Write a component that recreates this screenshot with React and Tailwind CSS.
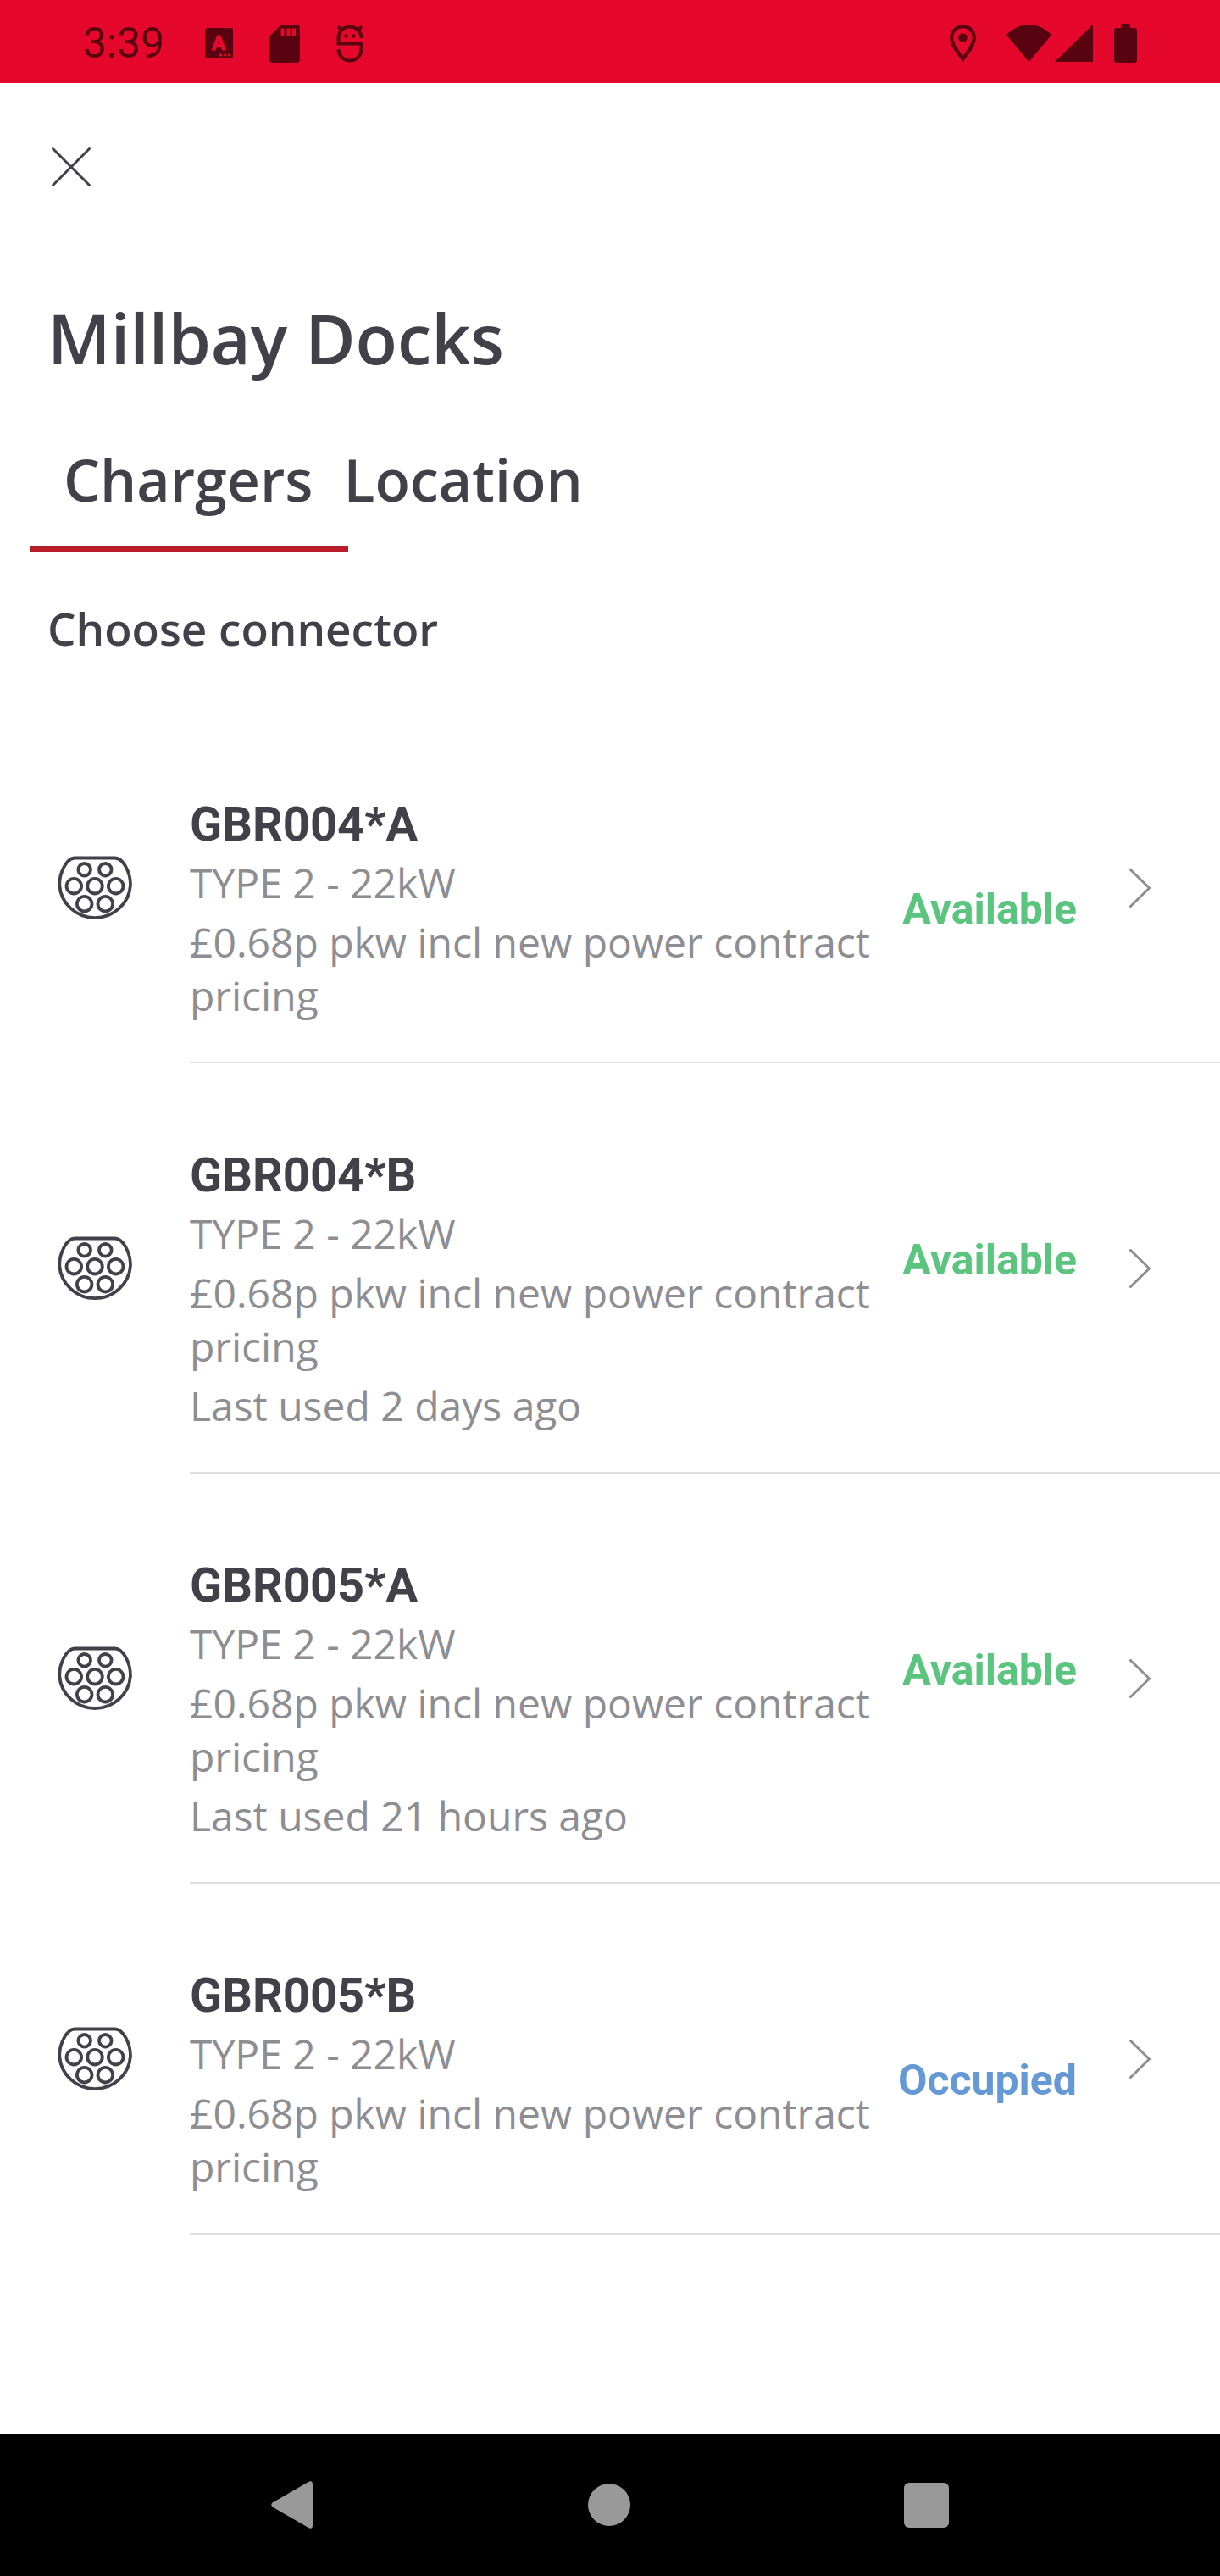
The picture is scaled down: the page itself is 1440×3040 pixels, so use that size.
import React, { useState } from 'react';

const chargers = [
  {
    id: 'GBR004*A',
    type: 'TYPE 2 - 22kW',
    price: '£0.68p pkw incl new power contract pricing',
    status: 'Available',
  },
  {
    id: 'GBR004*B',
    type: 'TYPE 2 - 22kW',
    price: '£0.68p pkw incl new power contract pricing',
    lastUsed: 'Last used 2 days ago',
    status: 'Available',
  },
  {
    id: 'GBR005*A',
    type: 'TYPE 2 - 22kW',
    price: '£0.68p pkw incl new power contract pricing',
    lastUsed: 'Last used 21 hours ago',
    status: 'Available',
  },
  {
    id: 'GBR005*B',
    type: 'TYPE 2 - 22kW',
    price: '£0.68p pkw incl new power contract pricing',
    status: 'Occupied',
  },
];

const StatusBar = () => {
  return (
    <div className="w-full h-[98px] bg-[#e6082c] text-[#5a0310] flex items-center justify-between px-[98px] pt-1">
      <div className="flex items-center">
        <span className="font-['Roboto',sans-serif] text-[50px] leading-[64px] mr-[48px]">
          3:39
        </span>
        <svg width="33" height="36" viewBox="0 0 33 36" className="mr-[43px]">
          <rect width="33" height="36" rx="3" fill="currentColor" />
          <text
            x="16"
            y="26"
            textAnchor="middle"
            fontFamily="Roboto, sans-serif"
            fontWeight="700"
            fontSize="24"
            fill="#e6082c"
            stroke="#e6082c"
            strokeWidth="1"
            strokeLinejoin="round"
          >
            A
          </text>
          <g fill="#e6082c">
            <circle cx="18.7" cy="32" r="1.7" />
            <circle cx="23.7" cy="32" r="1.7" />
            <circle cx="28.7" cy="32" r="1.7" />
          </g>
        </svg>
        <svg width="36" height="45" viewBox="0 0 36 45" className="mr-[43px]">
          <path
            d="M14 0H32a4 4 0 0 1 4 4V41a4 4 0 0 1-4 4H4a4 4 0 0 1-4-4V14Z"
            fill="currentColor"
          />
          <path
            d="M13.5 4.500h4v9h-4zM20.500 4.500h4v9h-4zM27 4.500h4v9h-4z"
            fill="#e6082c"
          />
        </svg>
        <svg
          width="32"
          height="45"
          viewBox="0 0 32 45"
          fill="none"
          stroke="currentColor"
          strokeWidth="4"
        >
          <path d="M29.500 16A13.500 13.500 0 0 0 2.500 16V22.500H29.500V29A13.500 13.500 0 0 1 2.500 29" />
          <path d="M2 2.500 6 6M30 2.500 26 6" />
          <circle cx="11.500" cy="13.500" r="2.200" fill="currentColor" stroke="none" />
          <circle cx="20.500" cy="13.500" r="2.200" fill="currentColor" stroke="none" />
        </svg>
      </div>

      <div className="flex items-center">
        <svg width="31" height="44" viewBox="0 0 31 44" className="mr-[36px]">
          <path
            d="M15.500 2.200C8 2.200 2.200 8 2.200 15.500 2.200 24 10 33 15.500 40.500 21 33 28.800 24 28.800 15.500 28.800 8 23 2.200 15.500 2.200Z"
            fill="none"
            stroke="currentColor"
            strokeWidth="4.200"
          />
          <circle cx="15.500" cy="15.500" r="5.300" fill="currentColor" />
        </svg>
        <svg width="53" height="44" viewBox="0 0 53 44" className="mr-1">
          <path d="M0 12.300C15-4 38-4 53 12.300L26.500 44Z" fill="currentColor" />
        </svg>
        <svg width="45" height="44" viewBox="0 0 45 44" className="mr-[25px]">
          <path d="M0 44 45 0V44Z" fill="currentColor" />
        </svg>
        <svg width="27" height="46" viewBox="0 0 27 46">
          <path
            d="M8 0H19V5H24a3 3 0 0 1 3 3V43a3 3 0 0 1-3 3H3a3 3 0 0 1-3-3V8a3 3 0 0 1 3-3H8Z"
            fill="currentColor"
          />
        </svg>
      </div>
    </div>
  );
};

const ConnectorIcon = () => {
  return (
    <svg
      width="88"
      height="78"
      viewBox="0 0 88 78"
      fill="none"
      stroke="#424149"
      strokeWidth="3.800"
      className="shrink-0"
    >
      <path d="M20.300 2.500H67.700C77 2.500 86 19 86 34.500A42 41.500 0 0 1 2.200 34.500C2.200 19 11 2.500 20.300 2.500Z" />
      <circle cx="31.700" cy="16.300" r="7.300" />
      <circle cx="56.300" cy="16.300" r="7.300" />
      <circle cx="19.300" cy="35.700" r="8.800" />
      <circle cx="44" cy="35.700" r="8.800" />
      <circle cx="68.700" cy="35.700" r="8.800" />
      <circle cx="31.700" cy="56.700" r="8.800" />
      <circle cx="56.300" cy="56.700" r="8.800" />
    </svg>
  );
};

const ChargerRow = ({ data }) => {
  return (
    <li className="w-full">
      <button
        type="button"
        className="w-full flex items-stretch text-left pl-[68px] cursor-pointer"
      >
        <span className="flex items-center pt-0.5 mr-[68px]">
          <ConnectorIcon />
        </span>
        <span className="flex-1 min-w-0 flex items-start pt-[99px] pb-[47px] pr-[62px] border-b-2 border-[#dedede]">
          <span className="flex-1 min-w-0 pr-3 text-[48px] leading-[63px] text-[#8e8d92]">
            <span className="block font-['Roboto',sans-serif] font-bold text-[56px] leading-[66px] text-[#424149]">
              {data.id}
            </span>
            <span className="block mt-1">{data.type}</span>
            <span className="block mt-[7px]">{data.price}</span>
            {data.lastUsed && (
              <span className="block mt-[7px]">{data.lastUsed}</span>
            )}
          </span>
          <span
            className={`mt-[102px] font-['Roboto',sans-serif] font-bold text-[50px] leading-[63px] ${
              data.status === 'Available' ? 'text-[#5bc47e]' : 'text-[#6499d6]'
            }`}
          >
            {data.status}
          </span>
        </span>
        <span className="flex items-center pt-0.5 pr-[82px] border-b-2 border-[#dedede]">
          <svg
            width="25"
            height="46"
            viewBox="0 0 25 46"
            fill="none"
            stroke="#8e8d92"
            strokeWidth="3"
            strokeLinecap="round"
            strokeLinejoin="round"
          >
            <path d="M1.500 1.500 23.500 23 1.500 44.500" />
          </svg>
        </span>
      </button>
    </li>
  );
};

const NavigationBar = () => {
  return (
    <nav className="w-full h-[168px] bg-black text-[#999999] flex items-center justify-between px-[320px] mt-auto">
      <button type="button" aria-label="Back" className="cursor-pointer">
        <svg width="50" height="56" viewBox="0 0 50 56" fill="currentColor">
          <path d="M1.500 25.500 44.500 0.700Q49 -1 49 4V52Q49 57 44.500 55.300L1.500 30.500Q-1 28 1.500 25.500Z" />
        </svg>
      </button>
      <button
        type="button"
        aria-label="Home"
        className="w-[50px] h-[50px] rounded-full bg-[#999999] cursor-pointer"
      />
      <button
        type="button"
        aria-label="Recent apps"
        className="w-[53px] h-[53px] rounded-md bg-[#999999] cursor-pointer"
      />
    </nav>
  );
};

const App = () => {
  const [active, setActive] = useState(1);

  return (
    <div className="w-full min-h-screen bg-white text-[#424149] font-['Open_Sans',sans-serif] flex flex-col">
      <StatusBar />
      <main className="w-full pt-[71px] pb-16">
        <div className="px-14">
          <button type="button" aria-label="Close" className="block cursor-pointer">
            <svg
              width="56"
              height="56"
              viewBox="0 0 56 56"
              stroke="currentColor"
              strokeWidth="3"
              strokeLinecap="round"
            >
              <path d="M6.500 6.500 49.500 49.500M49.500 6.500 6.500 49.500" />
            </svg>
          </button>
          <h1 className="mt-[124px] text-[81px] leading-[100px] font-semibold">
            Millbay Docks
          </h1>
        </div>

        {/* tabs */}
        <div className="mt-[73px] pl-[75px] flex gap-9 text-[68px] leading-[88px] font-semibold">
          <button
            type="button"
            className="cursor-pointer"
            onClick={() => setActive(1)}
          >
            Chargers
          </button>
          <button
            type="button"
            className="cursor-pointer"
            onClick={() => setActive(2)}
          >
            Location
          </button>
        </div>
        <div
          className={`mt-[34px] w-[376px] h-[7px] bg-[#b71c28] ${
            active === 1 ? 'ml-[35px]' : 'ml-[364px]'
          }`}
        />

        <h2 className="mt-[55px] px-14 text-[53px] leading-[72px] font-semibold">
          Choose connector
        </h2>

        <ul className="mt-[63px]">
          {chargers.map((item) => (
            <ChargerRow key={item.id} data={item} />
          ))}
        </ul>
      </main>
      <NavigationBar />
    </div>
  );
};

export default App;
